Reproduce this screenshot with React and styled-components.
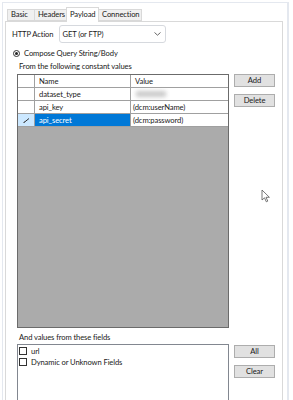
import React from 'react';
import styled, { createGlobalStyle } from 'styled-components';

const GlobalStyle = createGlobalStyle`
    body {
        margin: 0;
        background: #fff;
    }
`;

const Window = styled.div`
    width: 293px;
    height: 400px;
    overflow: hidden;
    position: relative;
    background: #fff;
    font-family: Lato, "Open Sans", sans-serif;
    font-size: 7.6px;
    letter-spacing: -0.1px;
    color: #1a1a1a;
    box-sizing: border-box;
    padding: 2px 4px 0 2px;
`;

const Frame = styled.div`
    height: 100%;
    box-sizing: border-box;
    border-top: 1px solid #e4e8ef;
    border-left: 1px solid #e4e8ef;
    border-right: 2px solid #e4e8ef;
    padding: 4px 4px 0 2px;
    display: flex;
    flex-direction: column;
`;

const TabStrip = styled.div`
    display: flex;
    align-items: flex-end;
    padding-left: 3px;
    height: 14px;
    position: relative;
    z-index: 1;
`;

const Tab = styled.div`
    box-sizing: border-box;
    width: ${p => p.w}px;
    height: ${p => (p.active ? '15px' : '12px')};
    margin-bottom: ${p => (p.active ? '-1px' : '0')};
    padding-left: 3px;
    display: flex;
    align-items: center;
    white-space: nowrap;
    background: ${p => (p.active ? '#fff' : '#f0f0f0')};
    border: 1px solid #d9d9d9;
    border-bottom: ${p => (p.active ? 'none' : '1px solid #d9d9d9')};
    margin-left: -1px;
    line-height: 1;
`;

const Panel = styled.div`
    flex: 1;
    border: 1px solid #d9d9d9;
    border-bottom: none;
    background: #fff;
    padding: 3px 0 0 6px;
    display: flex;
    flex-direction: column;
`;

const ActionRow = styled.div`
    display: flex;
    align-items: center;
    gap: 6px;
    height: 18px;
`;

const Select = styled.div`
    box-sizing: border-box;
    width: 107px;
    height: 18px;
    border: 1px solid #d6d9de;
    border-radius: 3px;
    display: flex;
    align-items: center;
    justify-content: space-between;
    padding: 0 4px 0 2px;
`;

const RadioRow = styled.div`
    display: flex;
    align-items: center;
    gap: 4px;
    margin-top: 5px;
    padding-left: 1px;
`;

const Radio = styled.span`
    width: 5px;
    height: 5px;
    border-radius: 50%;
    border: 1px solid #333;
    display: inline-flex;
    align-items: center;
    justify-content: center;
    &::after {
        content: '';
        width: 3px;
        height: 3px;
        border-radius: 50%;
        background: #222;
    }
`;

const Caption = styled.div`
    padding-left: 7px;
    margin-top: ${p => p.top}px;
    height: 12px;
    line-height: 12px;
`;

const Section = styled.div`
    display: flex;
    gap: 5px;
    padding-left: 5px;
    margin-top: ${p => p.top || 0}px;
`;

const Grid = styled.div`
    box-sizing: border-box;
    width: 212px;
    height: 254px;
    border: 1px solid #6b6b6b;
    background: #ababab;
    display: flex;
    flex-direction: column;
`;

const GridRow = styled.div`
    display: grid;
    grid-template-columns: 17px 96px 97px;
    height: 13px;
    background: #fff;
    border-bottom: 1px solid #a0a0a0;
    box-sizing: border-box;
`;

const Cell = styled.div`
    border-right: 1px solid #a0a0a0;
    padding-left: ${p => p.pad ?? 4}px;
    display: flex;
    align-items: center;
    background: ${p => p.bg || 'transparent'};
    color: ${p => p.fg || 'inherit'};
    &:last-child {
        border-right: none;
    }
`;

const Blurred = styled.span`
    display: inline-block;
    width: 30px;
    height: 6px;
    background: #c9c9c9;
    filter: blur(2px);
    margin-left: 3px;
`;

const ButtonCol = styled.div`
    display: flex;
    flex-direction: column;
    gap: 7px;
    margin-top: ${p => p.top || 0}px;
`;

const Button = styled.div`
    box-sizing: border-box;
    width: 41px;
    height: 13px;
    background: #e1e1e1;
    border: 1px solid #adadad;
    display: flex;
    align-items: center;
    justify-content: center;
    line-height: 1;
`;

const ListBox = styled.div`
    box-sizing: border-box;
    width: 212px;
    height: 70px;
    border: 1px solid #828790;
    border-bottom: none;
    padding: 2px 1px;
    display: flex;
    flex-direction: column;
    gap: 3px;
`;

const CheckItem = styled.div`
    display: flex;
    align-items: center;
    gap: 4px;
    height: 8px;
`;

const Box = styled.span`
    box-sizing: border-box;
    width: 8px;
    height: 8px;
    border: 1px solid #333;
    background: #fff;
`;

const Cursor = styled.svg`
    position: absolute;
    left: 261px;
    top: 189px;
`;

const Chevron = () => (
    <svg width="7" height="4" viewBox="0 0 7 4">
        <path d="M0.5 0.5 L3.5 3.2 L6.5 0.5" fill="none" stroke="#555" strokeWidth="0.9" />
    </svg>
);

const Pencil = () => (
    <svg width="7" height="5" viewBox="0 0 7 5">
        <path d="M1 4.5 L6 0.5" stroke="#333" strokeWidth="1" />
        <path d="M0.5 4.5 L1.5 4" stroke="#333" strokeWidth="1" />
    </svg>
);

const rows = [
    { name: 'dataset_type', value: null },
    { name: 'api_key', value: '(dcm:userName)' },
    { name: 'api_secret', value: '(dcm:password)', selected: true },
];

export default function App() {
    return (
        <Window>
            <GlobalStyle />
            <Frame>
                <TabStrip>
                    <Tab w={28}>Basic</Tab>
                    <Tab w={33}>Headers</Tab>
                    <Tab active w={33}>Payload</Tab>
                    <Tab w={44}>Connection</Tab>
                </TabStrip>
                <Panel>
                    <ActionRow>
                        <span>HTTP Action</span>
                        <Select>
                            <span>GET (or FTP)</span>
                            <Chevron />
                        </Select>
                    </ActionRow>
                    <RadioRow>
                        <Radio />
                        <span>Compose Query String/Body</span>
                    </RadioRow>
                    <Caption top={2}>From the following constant values</Caption>
                    <Section top={2}>
                        <Grid>
                            <GridRow>
                                <Cell />
                                <Cell>Name</Cell>
                                <Cell>Value</Cell>
                            </GridRow>
                            {rows.map(r => (
                                <GridRow key={r.name}>
                                    <Cell pad={5} bg={r.selected ? '#cce8ff' : '#fff'}>
                                        {r.selected && <Pencil />}
                                    </Cell>
                                    <Cell bg={r.selected ? '#0078d7' : '#fff'} fg={r.selected ? '#fff' : undefined}>
                                        {r.name}
                                    </Cell>
                                    <Cell pad={2}>{r.value === null ? <Blurred /> : r.value}</Cell>
                                </GridRow>
                            ))}
                        </Grid>
                        <ButtonCol>
                            <Button>Add</Button>
                            <Button>Delete</Button>
                        </ButtonCol>
                    </Section>
                    <Caption top={3}>And values from these fields</Caption>
                    <Section top={1}>
                        <ListBox>
                            <CheckItem>
                                <Box />
                                <span>url</span>
                            </CheckItem>
                            <CheckItem>
                                <Box />
                                <span>Dynamic or Unknown Fields</span>
                            </CheckItem>
                        </ListBox>
                        <ButtonCol top={1}>
                            <Button>All</Button>
                            <Button>Clear</Button>
                        </ButtonCol>
                    </Section>
                </Panel>
            </Frame>
            <Cursor width="10" height="14" viewBox="0 0 10 14">
                <path d="M1 1 L1 11 L3.5 8.8 L5.3 12.8 L6.8 12.1 L5 8.3 L8.4 8.3 Z" fill="#fff" stroke="#555" strokeWidth="0.8" />
            </Cursor>
        </Window>
    );
}
